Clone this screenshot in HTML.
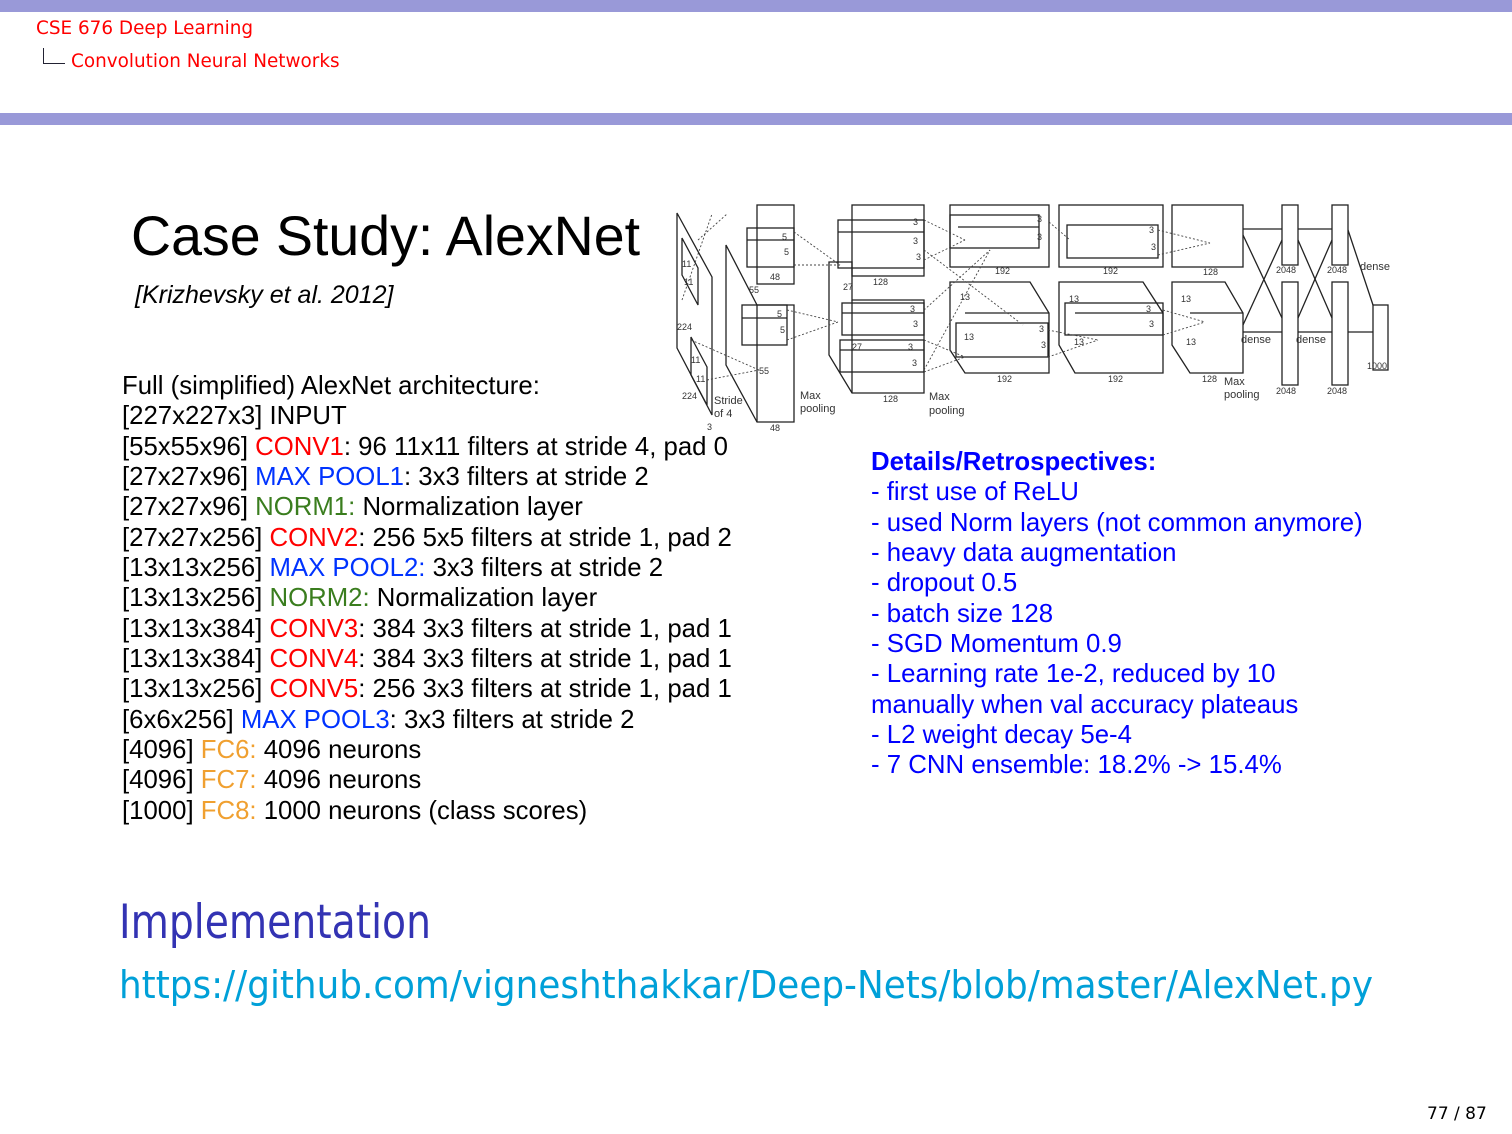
<!DOCTYPE html>
<html><head><meta charset="utf-8">
<style>
body{margin:0;width:1512px;height:1134px;position:relative;background:#fff;overflow:hidden;font-family:"Liberation Sans",Arial,sans-serif;}
.band{position:absolute;left:0;width:1512px;background:#9999d8;}
.hd{position:absolute;color:#f00;font-size:18.4px;font-family:"DejaVu Sans","Liberation Sans",sans-serif;}
.txt{position:absolute;font-size:25.75px;line-height:30.35px;color:#000;white-space:nowrap;}
.r{color:#f00}.b{color:#0033ff}.g{color:#3a7d1e}.o{color:#f0a030}
.det{position:absolute;left:871px;top:447px;font-size:25.8px;line-height:30.35px;color:#0000ff;white-space:nowrap;}
</style></head><body>
<div class="band" style="top:0;height:12px"></div>
<div class="band" style="top:113px;height:12px"></div>
<div class="hd" style="left:36px;top:18px">CSE 676 Deep Learning</div>
<div style="position:absolute;left:43px;top:48px;width:21px;height:15px;border-left:1.5px solid #223;border-bottom:1.5px solid #223;"></div>
<div class="hd" style="left:71px;top:51px">Convolution Neural Networks</div>

<div style="position:absolute;left:131px;top:204px;font-size:55.5px;color:#000;">Case Study: AlexNet</div>
<div style="position:absolute;left:135px;top:281px;font-size:25px;font-style:italic;">[Krizhevsky et al. 2012]</div>

<div class="txt" style="left:122px;top:371px">
Full (simplified) AlexNet architecture:<br>
[227x227x3] INPUT<br>
[55x55x96] <span class="r">CONV1</span>: 96 11x11 filters at stride 4, pad 0<br>
[27x27x96] <span class="b">MAX POOL1</span>: 3x3 filters at stride 2<br>
[27x27x96] <span class="g">NORM1:</span> Normalization layer<br>
[27x27x256] <span class="r">CONV2</span>: 256 5x5 filters at stride 1, pad 2<br>
[13x13x256] <span class="b">MAX POOL2:</span> 3x3 filters at stride 2<br>
[13x13x256] <span class="g">NORM2:</span> Normalization layer<br>
[13x13x384] <span class="r">CONV3</span>: 384 3x3 filters at stride 1, pad 1<br>
[13x13x384] <span class="r">CONV4</span>: 384 3x3 filters at stride 1, pad 1<br>
[13x13x256] <span class="r">CONV5</span>: 256 3x3 filters at stride 1, pad 1<br>
[6x6x256] <span class="b">MAX POOL3</span>: 3x3 filters at stride 2<br>
[4096] <span class="o">FC6:</span> 4096 neurons<br>
[4096] <span class="o">FC7:</span> 4096 neurons<br>
[1000] <span class="o">FC8:</span> 1000 neurons (class scores)
</div>

<div class="det">
<b>Details/Retrospectives:</b><br>
- first use of ReLU<br>
- used Norm layers (not common anymore)<br>
- heavy data augmentation<br>
- dropout 0.5<br>
- batch size 128<br>
- SGD Momentum 0.9<br>
- Learning rate 1e-2, reduced by 10<br>
manually when val accuracy plateaus<br>
- L2 weight decay 5e-4<br>
- 7 CNN ensemble: 18.2% -&gt; 15.4%
</div>

<svg style="position:absolute;left:0;top:0" width="1512" height="1134" font-family="Liberation Sans, sans-serif">
<g fill="none" stroke="#222" stroke-width="1.3">
<polygon points="677,213 712,277 712,415 677,348"/>
<polygon points="682,238 698,268 698,305 682,275"/>
<polygon points="691,337 707,367 707,405 691,375"/>
<polygon points="726,245 757,305 794,305 794,422 757,422 726,365"/>
<line x1="757" y1="305" x2="757" y2="422"/>
<rect x="757" y="205" width="37" height="79"/>
<rect x="747" y="228" width="47" height="39"/>
<line x1="747" y1="240" x2="794" y2="240"/>
<rect x="742" y="305" width="45" height="40"/>
<line x1="742" y1="318" x2="787" y2="318"/>
<rect x="852" y="205" width="72" height="71"/>
<polygon points="829,262 852,262 852,300 924,300 924,393 852,393 829,355"/>
<line x1="852" y1="300" x2="852" y2="393"/>
<rect x="838" y="220" width="86" height="48"/>
<line x1="838" y1="232" x2="924" y2="232"/>
<rect x="842" y="303" width="82" height="32"/>
<line x1="842" y1="313" x2="924" y2="313"/>
<rect x="840" y="340" width="84" height="32"/>
<line x1="840" y1="350" x2="924" y2="350"/>
<rect x="950" y="205" width="99" height="62"/>
<rect x="950" y="215" width="89" height="33"/>
<line x1="958" y1="227" x2="1039" y2="227"/>
<polygon points="950,282 1030,282 1049,313 1049,373 965,373 950,350"/>
<line x1="965" y1="313" x2="1049" y2="313"/>
<rect x="956" y="323" width="92" height="34"/>
<rect x="1059" y="205" width="104" height="62"/>
<rect x="1067" y="225" width="91" height="33"/>
<polygon points="1059,282 1143,282 1163,313 1163,373 1075,373 1059,345"/>
<line x1="1075" y1="313" x2="1163" y2="313"/>
<rect x="1065" y="303" width="98" height="32"/>
<rect x="1172" y="205" width="71" height="62"/>
<polygon points="1172,282 1225,282 1243,313 1243,373 1190,373 1172,345"/>
<line x1="1190" y1="313" x2="1243" y2="313"/>
<rect x="1282" y="205" width="16" height="60"/>
<rect x="1282" y="282" width="16" height="103"/>
<rect x="1332" y="205" width="16" height="60"/>
<rect x="1332" y="282" width="16" height="103"/>
<rect x="1373" y="305" width="15" height="65"/>
<line x1="1243" y1="229" x2="1282" y2="229"/><line x1="1298" y1="229" x2="1332" y2="229"/>
<line x1="1243" y1="332" x2="1282" y2="332"/><line x1="1298" y1="332" x2="1332" y2="332"/><line x1="1348" y1="332" x2="1373" y2="332"/>
<line x1="1243" y1="235" x2="1282" y2="318"/><line x1="1243" y1="325" x2="1282" y2="240"/>
<line x1="1298" y1="240" x2="1332" y2="318"/><line x1="1298" y1="318" x2="1332" y2="240"/>
<line x1="1348" y1="230" x2="1373" y2="305"/>
</g>
<g fill="none" stroke="#444" stroke-width="0.9" stroke-dasharray="2,2">
<line x1="682" y1="300" x2="712" y2="214"/><line x1="698" y1="240" x2="727" y2="214"/>
<line x1="691" y1="340" x2="759" y2="370"/><line x1="707" y1="380" x2="759" y2="370"/>
<line x1="794" y1="232" x2="840" y2="265"/><line x1="794" y1="265" x2="840" y2="265"/>
<line x1="787" y1="310" x2="838" y2="322"/><line x1="787" y1="340" x2="838" y2="322"/>
<line x1="924" y1="220" x2="965" y2="240"/><line x1="924" y1="260" x2="965" y2="240"/>
<line x1="924" y1="310" x2="990" y2="250"/><line x1="924" y1="370" x2="990" y2="250"/>
<line x1="924" y1="340" x2="965" y2="357"/><line x1="924" y1="372" x2="965" y2="357"/>
<line x1="924" y1="250" x2="1023" y2="325"/><line x1="1049" y1="222" x2="1070" y2="240"/>
<line x1="1048" y1="330" x2="1098" y2="340"/><line x1="1048" y1="357" x2="1098" y2="340"/>
<line x1="1158" y1="230" x2="1210" y2="243"/><line x1="1158" y1="255" x2="1210" y2="243"/>
<line x1="1163" y1="310" x2="1205" y2="322"/><line x1="1163" y1="335" x2="1205" y2="322"/>
</g>
<g font-size="9" fill="#333">
<text x="682" y="267">11</text><text x="684" y="285">11</text><text x="677" y="330">224</text>
<text x="691" y="363">11</text><text x="696" y="382">11</text><text x="682" y="399">224</text>
<text x="714" y="404" font-size="11">Stride</text><text x="714" y="417" font-size="11">of 4</text>
<text x="707" y="430">3</text><text x="770" y="431">48</text><text x="770" y="280">48</text>
<text x="749" y="293">55</text><text x="759" y="374">55</text>
<text x="782" y="240">5</text><text x="784" y="255">5</text><text x="777" y="317">5</text><text x="780" y="333">5</text>
<text x="800" y="399" font-size="11">Max</text><text x="800" y="412" font-size="11">pooling</text>
<text x="843" y="290">27</text><text x="873" y="285">128</text><text x="852" y="350">27</text><text x="883" y="402">128</text>
<text x="913" y="225">3</text><text x="913" y="244">3</text><text x="916" y="260">3</text>
<text x="910" y="312">3</text><text x="913" y="327">3</text><text x="908" y="350">3</text><text x="912" y="366">3</text>
<text x="929" y="400" font-size="11">Max</text><text x="929" y="414" font-size="11">pooling</text>
<text x="995" y="274">192</text><text x="960" y="300">13</text><text x="964" y="340">13</text>
<text x="1037" y="222">3</text><text x="1037" y="240">3</text><text x="1039" y="332">3</text><text x="1041" y="348">3</text>
<text x="997" y="382">192</text><text x="1103" y="274">192</text>
<text x="1069" y="302">13</text><text x="1074" y="345">13</text>
<text x="1149" y="233">3</text><text x="1151" y="250">3</text><text x="1146" y="312">3</text><text x="1149" y="327">3</text>
<text x="1108" y="382">192</text><text x="1203" y="275">128</text>
<text x="1181" y="302">13</text><text x="1186" y="345">13</text><text x="1202" y="382">128</text>
<text x="1224" y="385" font-size="11">Max</text><text x="1224" y="398" font-size="11">pooling</text>
<text x="1241" y="343" font-size="11">dense</text><text x="1296" y="343" font-size="11">dense</text><text x="1360" y="270" font-size="11">dense</text>
<text x="1276" y="273">2048</text><text x="1327" y="273">2048</text><text x="1276" y="394">2048</text><text x="1327" y="394">2048</text>
<text x="1367" y="369">1000</text>
</g>
<text x="119" y="938" font-size="47" fill="#3333b3" textLength="312" lengthAdjust="spacingAndGlyphs" font-family="DejaVu Sans, Liberation Sans, sans-serif">Implementation</text>
<text x="119" y="998" font-size="38" fill="#00a0d8" textLength="1254" lengthAdjust="spacingAndGlyphs" font-family="DejaVu Sans, Liberation Sans, sans-serif">https://github.com/vigneshthakkar/Deep-Nets/blob/master/AlexNet.py</text>
</svg>
<div style="position:absolute;left:1427px;top:1104px;font-size:17px;font-family:'DejaVu Sans','Liberation Sans',sans-serif;color:#000;">77 / 87</div>
</body></html>
